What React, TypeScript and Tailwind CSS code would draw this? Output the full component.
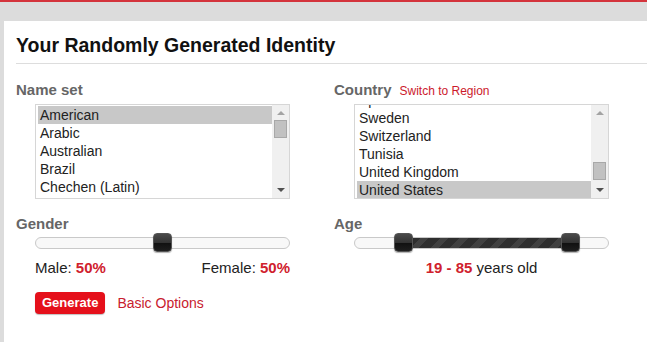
import React from "react";

const font = { fontFamily: '"Liberation Sans", Arial, sans-serif' };

type ListProps = {
  items: string[];
  selected: string;
  offset: number;
  thumbTop: number;
};

const ListBox = ({ items, selected, offset, thumbTop }: ListProps) => {
  return (
    <div className="relative w-[255px] h-[95px] border border-[#d6d6d6] bg-white flex overflow-hidden">
      <div className="flex-1 overflow-hidden pt-[1px] pl-[2px]">
        <div style={{ marginTop: offset }}>
          {items.map((item) => (
            <div
              key={item}
              className={
                "h-[18px] leading-[18px] pl-[2px] text-[14px] text-[#222] " +
                (item === selected ? "bg-[#c8c8c8]" : "")
              }
            >
              {item}
            </div>
          ))}
        </div>
      </div>
      <div className="w-[17px] h-full bg-[#f0f0f0] relative">
        <div className="absolute left-[5px] top-[6px] w-0 h-0 border-l-[4px] border-r-[4px] border-b-[4px] border-l-transparent border-r-transparent border-b-[#a3a3a3]" />
        <div
          className="absolute left-[2px] w-[13px] h-[18px] bg-[#c1c1c1] border border-[#a8a8a8]"
          style={{ top: thumbTop }}
        />
        <div className="absolute left-[5px] bottom-[6px] w-0 h-0 border-l-[4px] border-r-[4px] border-t-[4px] border-l-transparent border-r-transparent border-t-[#505050]" />
      </div>
    </div>
  );
};

const Handle = () => (
  <div className="w-[19px] h-[19px] rounded-[4px] border border-[#555] bg-[linear-gradient(to_bottom,#4a4a4a_0%,#333_50%,#111_55%,#1e1e1e_100%)] shadow-[0_1px_1px_rgba(0,0,0,0.3)]" />
);

const Label = ({ children }: { children: React.ReactNode }) => (
  <div className="text-[15px] font-bold text-[#666] h-[20px] leading-[20px]">{children}</div>
);

export default function App() {
  return (
    <div
      style={font}
      className="w-[647px] h-[342px] bg-[#dcdcdc] border-t-2 border-[#d4343c] overflow-hidden flex flex-col"
    >
      <div className="h-[19px] shrink-0" />
      <div className="flex-1 ml-[4px] bg-white pl-[12px]">
        <div className="pt-[12px] h-[42px] text-[19.5px] font-bold text-[#111] leading-[24px]">
          Your Randomly Generated Identity
        </div>
        <div className="h-[1px] bg-[#dddddd]" />

        <div className="flex mt-[16px]">
          <div className="w-[318px] shrink-0">
            <Label>Name set</Label>
            <div className="pl-[19px] mt-[4px]">
              <ListBox
                items={["American", "Arabic", "Australian", "Brazil", "Chechen (Latin)"]}
                selected="American"
                offset={0}
                thumbTop={15}
              />
            </div>
            <div className="mt-[15px]">
              <Label>Gender</Label>
            </div>
            <div className="ml-[19px] w-[255px] relative h-[18px] flex items-center">
              <div className="w-full h-[12px] rounded-[6px] border border-[#c9c9c9] bg-[#f8f8f8]" />
              <div className="absolute left-[118px] top-[-1px]">
                <Handle />
              </div>
            </div>
            <div className="ml-[19px] w-[255px] flex justify-between mt-[7px] h-[18px] leading-[18px] text-[15px] text-[#222]">
              <span>
                Male: <b className="text-[#d0212d]">50%</b>
              </span>
              <span>
                Female: <b className="text-[#d0212d]">50%</b>
              </span>
            </div>
            <div className="ml-[19px] mt-[15px] flex items-center gap-[12px]">
              <div className="h-[22px] px-[7px] rounded-[4px] bg-[#e5101b] text-white text-[13px] font-bold leading-[22px] shadow-[0_1px_1px_rgba(0,0,0,0.25)]">
                Generate
              </div>
              <span className="text-[14px] text-[#c8202e]">Basic Options</span>
            </div>
          </div>

          <div className="w-[318px] shrink-0">
            <div className="flex items-baseline gap-[8px]">
              <Label>Country</Label>
              <span className="text-[12px] text-[#cc1a2c]">Switch to Region</span>
            </div>
            <div className="pl-[20px] mt-[4px]">
              <ListBox
                items={["Spain", "Sweden", "Switzerland", "Tunisia", "United Kingdom", "United States"]}
                selected="United States"
                offset={-15}
                thumbTop={57}
              />
            </div>
            <div className="mt-[15px]">
              <Label>Age</Label>
            </div>
            <div className="ml-[20px] w-[255px] relative h-[18px] flex items-center">
              <div className="w-full h-[12px] rounded-[6px] border border-[#c9c9c9] bg-[#f8f8f8]" />
              <div className="absolute left-[55px] right-[30px] top-[4px] h-[10px] bg-[repeating-linear-gradient(135deg,#2e2e2e_0px,#2e2e2e_8px,#404040_8px,#404040_14px)]" />
              <div className="absolute left-[40px] top-[-1px]">
                <Handle />
              </div>
              <div className="absolute left-[207px] top-[-1px]">
                <Handle />
              </div>
            </div>
            <div className="ml-[20px] w-[255px] text-center mt-[7px] h-[18px] leading-[18px] text-[15px] text-[#222]">
              <b className="text-[#d0212d]">19 - 85</b> years old
            </div>
          </div>
        </div>
      </div>
    </div>
  );
}
